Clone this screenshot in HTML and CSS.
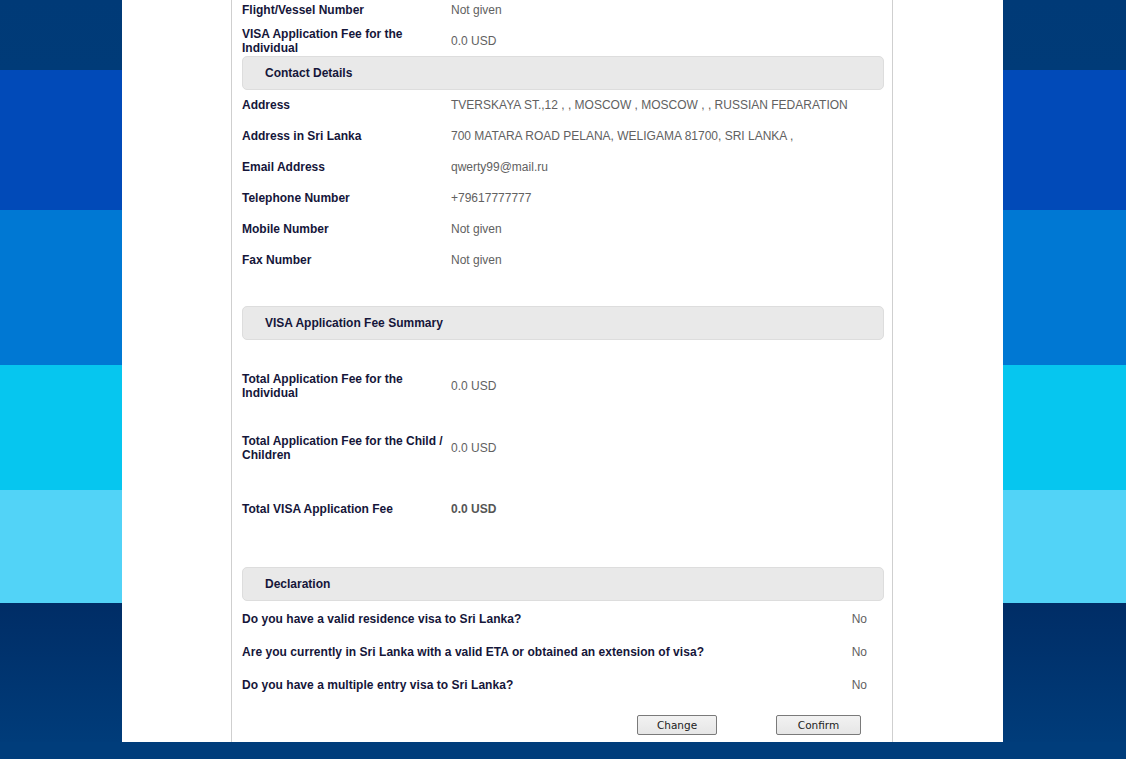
FILE: index.html
```html
<!DOCTYPE html>
<html lang="en">
<head>
<meta charset="utf-8">
<title>ETA Application - Confirm</title>
<link rel="stylesheet" href="styles.css">
</head>
<body>
<div class="sheet">
  <div class="panel">
    <div class="row row-first">
      <div class="label">Flight/Vessel Number</div>
      <div class="value">Not given</div>
    </div>
    <div class="row row-fee">
      <div class="label">VISA Application Fee for the Individual</div>
      <div class="value">0.0 USD</div>
    </div>

    <div class="section-head">Contact Details</div>
    <div class="contact">
      <div class="row row-contact">
        <div class="label">Address</div>
        <div class="value">TVERSKAYA ST.,12 , , MOSCOW , MOSCOW , , RUSSIAN FEDARATION</div>
      </div>
      <div class="row row-contact">
        <div class="label">Address in Sri Lanka</div>
        <div class="value">700 MATARA ROAD PELANA, WELIGAMA 81700, SRI LANKA ,</div>
      </div>
      <div class="row row-contact">
        <div class="label">Email Address</div>
        <div class="value">qwerty99@mail.ru</div>
      </div>
      <div class="row row-contact">
        <div class="label">Telephone Number</div>
        <div class="value">+79617777777</div>
      </div>
      <div class="row row-contact">
        <div class="label">Mobile Number</div>
        <div class="value">Not given</div>
      </div>
      <div class="row row-contact">
        <div class="label">Fax Number</div>
        <div class="value">Not given</div>
      </div>
    </div>

    <div class="section-head section-gap">VISA Application Fee Summary</div>
    <div class="summary">
      <div class="row row-sum">
        <div class="label">Total Application Fee for the Individual</div>
        <div class="value">0.0 USD</div>
      </div>
      <div class="row row-sum">
        <div class="label">Total Application Fee for the Child / Children</div>
        <div class="value">0.0 USD</div>
      </div>
      <div class="row row-sum row-sum-last">
        <div class="label">Total VISA Application Fee</div>
        <div class="value value-strong">0.0 USD</div>
      </div>
    </div>

    <div class="section-head section-gap-decl">Declaration</div>
    <div class="declaration">
      <div class="qrow">
        <div class="question">Do you have a valid residence visa to Sri Lanka?</div>
        <div class="answer">No</div>
      </div>
      <div class="qrow">
        <div class="question">Are you currently in Sri Lanka with a valid ETA or obtained an extension of visa?</div>
        <div class="answer">No</div>
      </div>
      <div class="qrow">
        <div class="question">Do you have a multiple entry visa to Sri Lanka?</div>
        <div class="answer">No</div>
      </div>
    </div>

    <div class="actions">
      <button class="btn btn-change" type="button">Change</button>
      <button class="btn btn-confirm" type="button">Confirm</button>
    </div>
  </div>
</div>
</body>
</html>
```

FILE: styles.css
```css
html, body {
  margin: 0;
  padding: 0;
}

body {
  width: 1126px;
  height: 759px;
  overflow: hidden;
  font-family: "Liberation Sans", Arial, sans-serif;
  font-size: 12px;
  background:
    linear-gradient(to bottom,
      #003a77 0px, #003b78 70px,
      #014ab8 70px, #014ab8 210px,
      #0078d3 210px, #0078d3 365px,
      #06c6ef 365px, #06c6ef 490px,
      #52d3f7 490px, #52d3f7 603px,
      #002d66 603px, #003c7a 742px,
      #003d7b 742px, #003d7b 759px);
}

.sheet {
  width: 881px;
  height: 742px;
  margin: 0 0 0 122px;
  background: #ffffff;
}

.panel {
  box-sizing: border-box;
  width: 662px;
  height: 742px;
  margin: 0 0 0 109px;
  padding: 0 8px 0 10px;
  border-left: 1px solid #cfcfcf;
  border-right: 1px solid #cfcfcf;
}

.row {
  display: flex;
  align-items: center;
}

.label {
  box-sizing: border-box;
  width: 209px;
  flex: none;
  padding-right: 4px;
  font-weight: bold;
  color: #15163a;
  line-height: 14px;
}

.value {
  color: #616161;
  line-height: 14px;
}

.value-strong {
  font-weight: bold;
  color: #555555;
}

.row-first {
  height: 20px;
}

.row-fee {
  height: 30px;
  padding-top: 6px;
}

.row-fee .label {
  padding-right: 40px;
}

.section-head {
  box-sizing: border-box;
  height: 34px;
  padding-left: 22px;
  display: flex;
  align-items: center;
  background: #e9e9e9;
  border: 1px solid #dddddd;
  border-radius: 5px;
  font-weight: bold;
  color: #15163a;
}

.row-contact {
  height: 28px;
  padding: 1px 0 2px;
}

.section-gap {
  margin-top: 30px;
}

.summary {
  padding-top: 15px;
}

.row-sum {
  height: 62px;
}

.row-sum-last {
  height: 60px;
}

.section-gap-decl {
  margin-top: 28px;
}

.declaration {
  padding-top: 1px;
}

.qrow {
  display: flex;
  align-items: center;
  justify-content: space-between;
  height: 33px;
}

.question {
  font-weight: bold;
  color: #15163a;
  letter-spacing: 0.04px;
}

.answer {
  color: #616161;
  padding-right: 17px;
}

.actions {
  display: flex;
  justify-content: flex-end;
  gap: 59px;
  padding-top: 14px;
  padding-right: 23px;
}

.btn {
  box-sizing: border-box;
  height: 20px;
  padding: 0;
  font-family: "DejaVu Sans", Verdana, sans-serif;
  font-size: 10.5px;
  color: #222222;
  background: linear-gradient(#f2f2f2, #e6e6e6);
  border: 1px solid #7a7a7a;
  border-radius: 2px;
}

.btn-change {
  width: 80px;
}

.btn-confirm {
  width: 85px;
}
```
